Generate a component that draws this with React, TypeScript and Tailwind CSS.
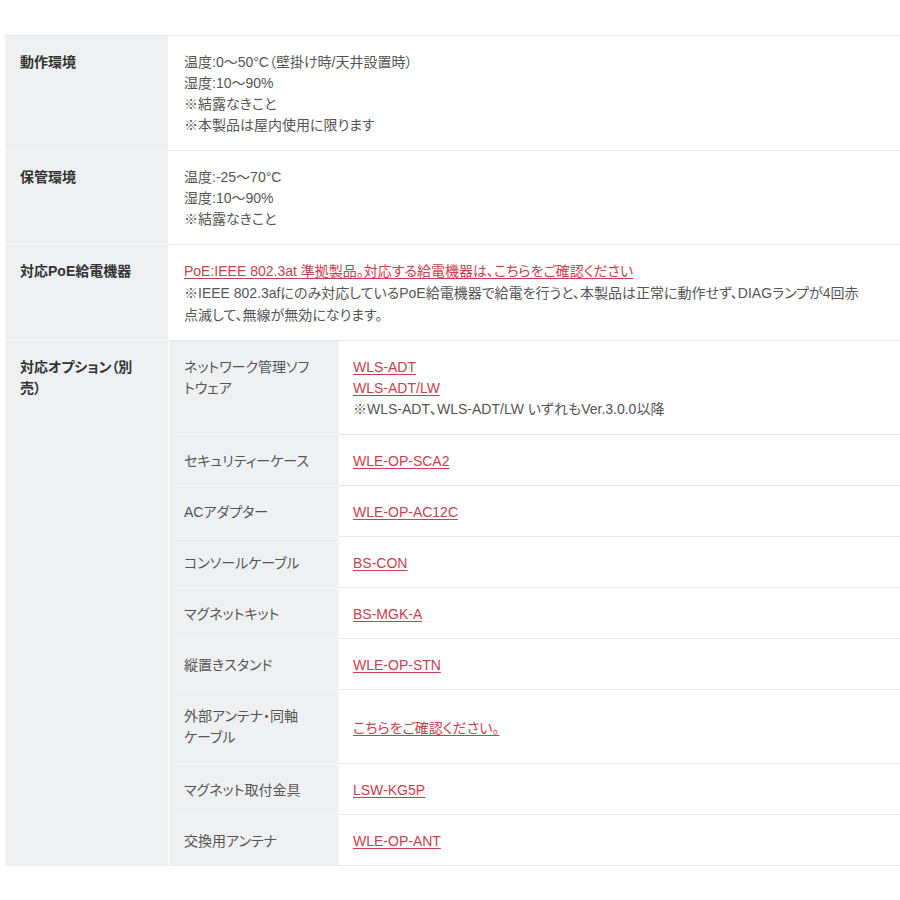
import React from "react";

const font = { fontFamily: '"Liberation Sans", "Noto Sans CJK JP", sans-serif' };

function A({ children }: { children: React.ReactNode }) {
  return (
    <a className="text-[#c8404f] underline underline-offset-[2px] decoration-[#c8404f]" href="#">
      {children}
    </a>
  );
}

function MainRow({ label, children }: { label: React.ReactNode; children: React.ReactNode }) {
  return (
    <div className="flex">
      <div className="w-[164px] shrink-0 bg-[#eff0f2] border-r border-white border-b border-b-[#f7f7f8] pl-[15px] pr-3 pt-4 pb-[14px] font-bold text-[#333]">
        {label}
      </div>
      <div className="flex-1 border-b border-[#e6e6e6] pl-[15px] pr-[15px] pt-4 pb-[14px] text-[#555]">
        {children}
      </div>
    </div>
  );
}

function SubRow({ label, children, last, tall }: { label: React.ReactNode; children: React.ReactNode; last?: boolean; tall?: boolean }) {
  return (
    <div className="flex">
      <div className={"w-[170px] shrink-0 bg-[#eff0f2] pl-[15px] pr-[14px] pt-4 text-[#555] border-b " + (tall ? "pb-[15px] " : "pb-[13px] ") + (last ? "border-[#e6e6e6]" : "border-[#f7f7f8]")}>
        {label}
      </div>
      <div className="flex-1 flex flex-col justify-center border-b border-[#e6e6e6] pl-[14px] pr-[15px] pt-4 pb-[13px] text-[#555]">
        {children}
      </div>
    </div>
  );
}

export default function App() {
  return (
    <div
      className="w-[900px] h-[900px] bg-white overflow-hidden pt-[35px] pl-[5px] text-[14px] leading-[21px] [font-feature-settings:'palt']"
      style={font}
    >
      <div className="border-t border-[#e6e6e6]">
        <MainRow label="動作環境">
          <div>温度:0～50°C（壁掛け時/天井設置時）</div>
          <div>湿度:10～90%</div>
          <div>※結露なきこと</div>
          <div>※本製品は屋内使用に限ります</div>
        </MainRow>
        <MainRow label="保管環境">
          <div>温度:-25～70°C</div>
          <div>湿度:10～90%</div>
          <div>※結露なきこと</div>
        </MainRow>
        <MainRow label="対応PoE給電機器">
          <div>
            <A>PoE:IEEE 802.3at 準拠製品。対応する給電機器は、こちらをご確認ください</A>
          </div>
          <div className="leading-[22px]">
            <span className="whitespace-nowrap">
              ※IEEE 802.3afにのみ対応しているPoE給電機器で給電を行うと、本製品は正常に動作せず、DIAGランプが4回赤
            </span>
            <br />
            点滅して、無線が無効になります。
          </div>
        </MainRow>
        <div className="flex">
          <div className="w-[164px] shrink-0 bg-[#eff0f2] border-r border-white pl-[15px] pr-3 pt-4 font-bold text-[#333]">
            対応オプション（別
            <br />
            売）
          </div>
          <div className="flex-1 flex flex-col">
            <div className="flex">
              <div className="w-[170px] shrink-0 bg-[#eff0f2] pl-[15px] pr-[14px] pt-4 pb-[14px] text-[#555] border-b border-[#f7f7f8]">
                ネットワーク管理ソフ
                <br />
                トウェア
              </div>
              <div className="flex-1 border-b border-[#e6e6e6] pl-[14px] pr-[15px] pt-4 pb-[14px] text-[#555]">
                <div><A>WLS-ADT</A></div>
                <div><A>WLS-ADT/LW</A></div>
                <div>※WLS-ADT、WLS-ADT/LW いずれもVer.3.0.0以降</div>
              </div>
            </div>
            <SubRow label="セキュリティーケース"><div><A>WLE-OP-SCA2</A></div></SubRow>
            <SubRow label="ACアダプター"><div><A>WLE-OP-AC12C</A></div></SubRow>
            <SubRow label="コンソールケーブル"><div><A>BS-CON</A></div></SubRow>
            <SubRow label="マグネットキット"><div><A>BS-MGK-A</A></div></SubRow>
            <SubRow label="縦置きスタンド"><div><A>WLE-OP-STN</A></div></SubRow>
            <SubRow label={<>外部アンテナ・同軸<br />ケーブル</>} tall><div><A>こちらをご確認ください。</A></div></SubRow>
            <SubRow label="マグネット取付金具"><div><A>LSW-KG5P</A></div></SubRow>
            <SubRow label="交換用アンテナ" last><div><A>WLE-OP-ANT</A></div></SubRow>
          </div>
        </div>
      </div>
    </div>
  );
}
